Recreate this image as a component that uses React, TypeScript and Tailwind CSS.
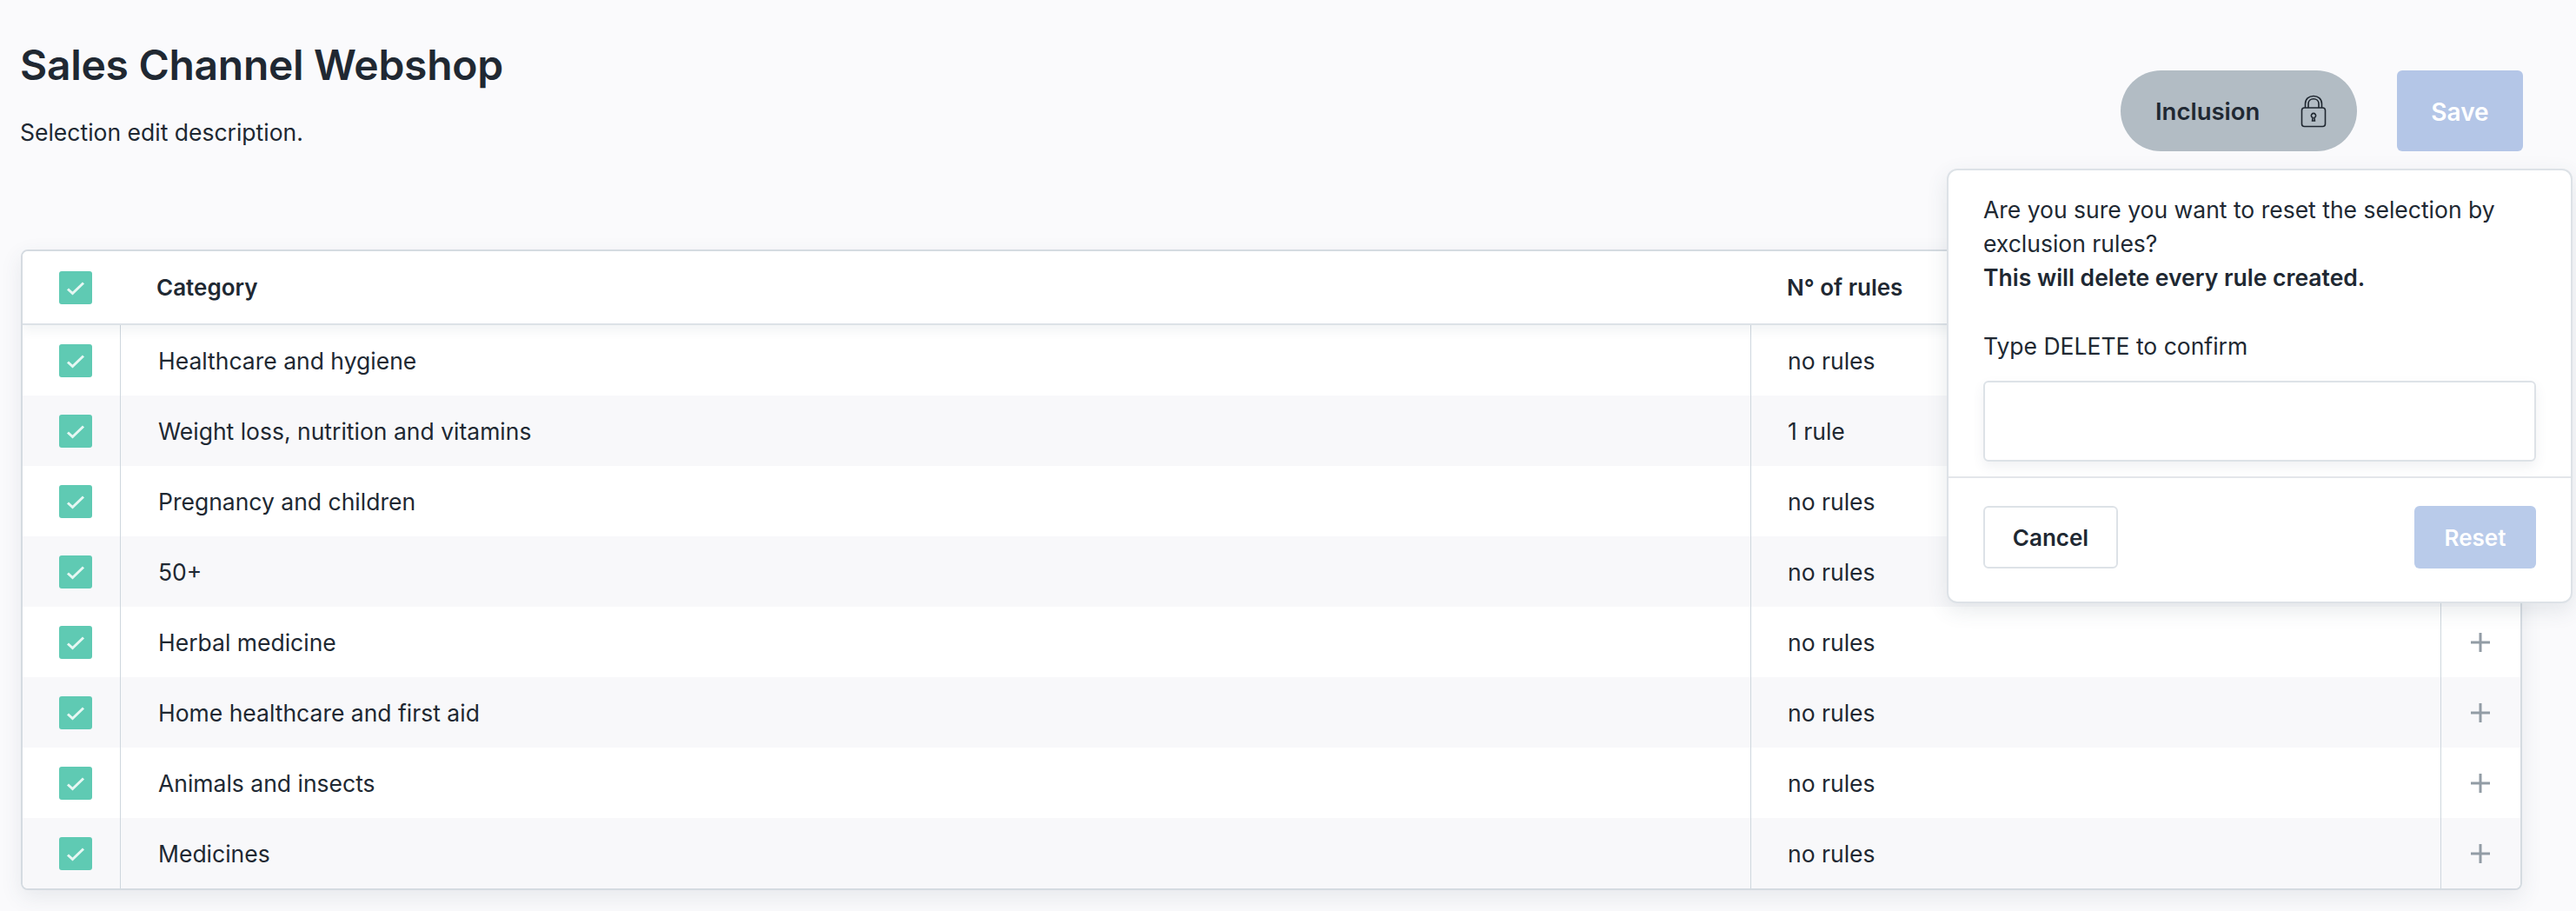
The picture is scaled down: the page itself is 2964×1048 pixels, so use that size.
const rows = [
  { name: "Healthcare and hygiene", rules: "no rules" },
  { name: "Weight loss, nutrition and vitamins", rules: "1 rule" },
  { name: "Pregnancy and children", rules: "no rules" },
  { name: "50+", rules: "no rules" },
  { name: "Herbal medicine", rules: "no rules" },
  { name: "Home healthcare and first aid", rules: "no rules" },
  { name: "Animals and insects", rules: "no rules" },
  { name: "Medicines", rules: "no rules" },
];

function Check() {
  return (
    <span className="flex h-[38px] w-[38px] items-center justify-center rounded-[3px] bg-[#5fcab3]">
      <svg width="24" height="24" viewBox="0 0 24 24" fill="none">
        <path d="M3 13.5l5.5 5L21 6.5" stroke="#e6f7f3" strokeWidth="3" />
      </svg>
    </span>
  );
}

function Lock() {
  return (
    <svg width="30" height="38" viewBox="0 0 30 38" fill="none" stroke="#1f2730" strokeWidth="1.6">
      <rect x="1.5" y="15" width="27" height="21.5" rx="3" />
      <path d="M5.5 15V10.5C5.5 5 9.5 1.5 15 1.5S24.5 5 24.5 10.5V15" />
      <path d="M9 15V10.5C9 7 11.5 4.8 15 4.8S21 7 21 10.5V15" />
      <path d="M13.6 30h2.8l-.5-3.6a2.6 2.6 0 1 0-1.8 0z" />
    </svg>
  );
}

function Plus() {
  return (
    <svg width="22" height="22" viewBox="0 0 22 22" stroke="#929ca5" strokeWidth="3">
      <path d="M11 0v22M0 11h22" />
    </svg>
  );
}

export default function App() {
  return (
    <div className="relative min-h-[1048px] overflow-hidden bg-[#fafafc] font-['Inter',sans-serif] text-[#202832]">
      <header className="flex h-[287px] justify-between pl-6 pr-[61px]">
        <div>
          <h1 className="mt-[45px] -ml-px text-[48px] leading-[60px] font-semibold tracking-[-0.3px]">Sales Channel Webshop</h1>
          <p className="mt-[29px] -ml-px text-[26.5px] leading-9">Selection edit description.</p>
        </div>
        <div className="mt-[81px] flex h-[93px] gap-[46px]">
          <div className="flex w-[272px] items-center justify-between rounded-full bg-[#b2bcc4] pr-[35px] pl-10">
            <span className="pt-[2px] text-[27.5px] font-semibold">Inclusion</span>
            <Lock />
          </div>
          <button className="w-[145px] rounded-md bg-[#b4c6e7] pt-[2px] text-[28px] font-semibold text-white">Save</button>
        </div>
      </header>

      <section className="ml-6 w-[2878px] overflow-hidden rounded-lg border-2 border-[#d5dbe1] bg-white shadow-[0_8px_24px_rgba(60,80,100,0.1)]">
        <div className="relative z-10 grid h-[85px] grid-cols-[113px_1875px_1fr] items-center border-b-2 border-[#dde2e7] bg-white text-[26px] font-semibold shadow-[0_6px_12px_rgba(60,80,100,0.07)]">
          <div className="flex justify-center pl-2">
            <Check />
          </div>
          <div className="pl-[41px]">Category</div>
          <div className="pl-[42px]">N° of rules</div>
        </div>
        {rows.map((row, i) => (
          <div
            key={row.name}
            className={`grid h-[81px] grid-cols-[113px_1876px_794px_1fr] items-stretch text-[26.5px] ${i % 2 === 1 ? "bg-[#f8f8fa]" : "bg-white"}`}
          >
            <div className="flex items-center justify-center border-r border-[#cfd7de] pl-[9px]">
              <Check />
            </div>
            <div className="flex items-center border-r border-[#cfd7de] pt-[2px] pl-[43px]">{row.name}</div>
            <div className="flex items-center border-r border-[#cfd7de] pt-[2px] pl-[42px]">{row.rules}</div>
            <div className="flex items-center justify-center pr-[1px]">
              <Plus />
            </div>
          </div>
        ))}
      </section>

      <div className="absolute top-[194px] left-[2240px] z-20 flex h-[500px] w-[720px] flex-col rounded-xl border-2 border-[#dde2e7] bg-white shadow-[0_8px_24px_rgba(60,80,100,0.12)]">
        <div className="flex-1 px-10 pt-[26px] text-[26.5px] leading-[39px]">
          <p>
            Are you sure you want to reset the selection by
            <br />
            exclusion rules?
            <br />
            <strong className="font-semibold">This will delete every rule created.</strong>
          </p>
          <p className="mt-[40px]">Type DELETE to confirm</p>
          <input className="mt-[20px] h-[93px] w-full rounded-md border-2 border-[#dde2e7] bg-white shadow-[0_6px_14px_rgba(60,80,100,0.08)]" />
        </div>
        <div className="flex h-[144px] items-start justify-between border-t-2 border-[#e3e6ea] px-10 pt-[32px]">
          <button className="h-[72px] w-[155px] rounded-md border-2 border-[#dde2e7] bg-white text-[26px] font-semibold">Cancel</button>
          <button className="h-[72px] w-[140px] rounded-md bg-[#b9cbea] text-[26px] font-semibold text-white">Reset</button>
        </div>
      </div>
    </div>
  );
}
